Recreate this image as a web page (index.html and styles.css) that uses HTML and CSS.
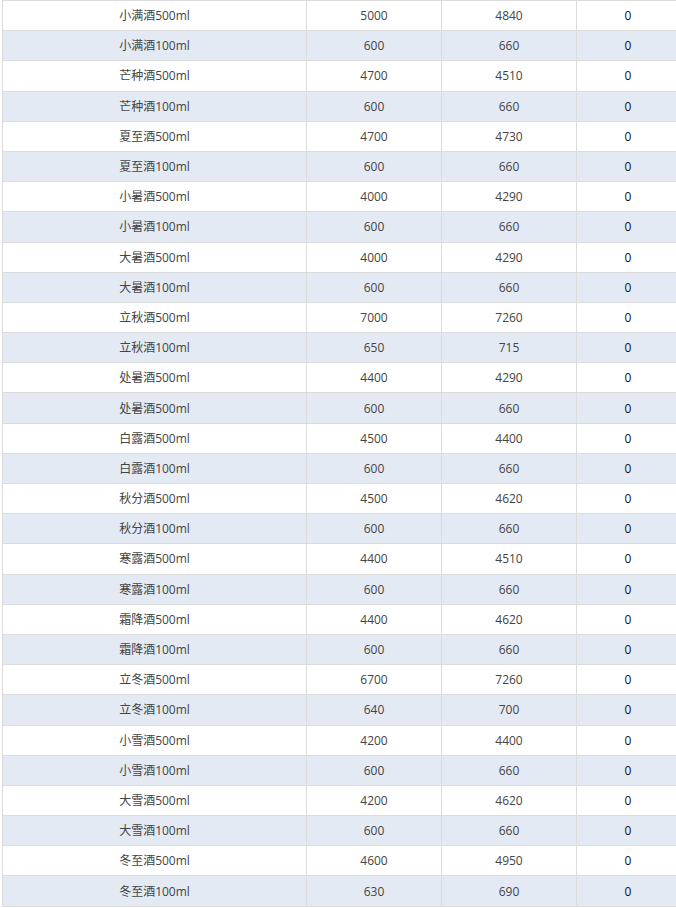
FILE: index.html
```html
<!DOCTYPE html>
<html lang="zh">
<head>
<meta charset="utf-8">
<link rel="stylesheet" href="styles.css">
</head>
<body>
<div class="wrap">
<table class="grid">
<colgroup><col class="c1"><col class="c2"><col class="c3"><col class="c4"></colgroup>
<tbody>
<tr><td>小满酒500ml</td><td>5000</td><td>4840</td><td class="z">0</td></tr>
<tr><td>小满酒100ml</td><td>600</td><td>660</td><td class="z">0</td></tr>
<tr><td>芒种酒500ml</td><td>4700</td><td>4510</td><td class="z">0</td></tr>
<tr><td>芒种酒100ml</td><td>600</td><td>660</td><td class="z">0</td></tr>
<tr><td>夏至酒500ml</td><td>4700</td><td>4730</td><td class="z">0</td></tr>
<tr><td>夏至酒100ml</td><td>600</td><td>660</td><td class="z">0</td></tr>
<tr><td>小暑酒500ml</td><td>4000</td><td>4290</td><td class="z">0</td></tr>
<tr><td>小暑酒100ml</td><td>600</td><td>660</td><td class="z">0</td></tr>
<tr><td>大暑酒500ml</td><td>4000</td><td>4290</td><td class="z">0</td></tr>
<tr><td>大暑酒100ml</td><td>600</td><td>660</td><td class="z">0</td></tr>
<tr><td>立秋酒500ml</td><td>7000</td><td>7260</td><td class="z">0</td></tr>
<tr><td>立秋酒100ml</td><td>650</td><td>715</td><td class="z">0</td></tr>
<tr><td>处暑酒500ml</td><td>4400</td><td>4290</td><td class="z">0</td></tr>
<tr><td>处暑酒500ml</td><td>600</td><td>660</td><td class="z">0</td></tr>
<tr><td>白露酒500ml</td><td>4500</td><td>4400</td><td class="z">0</td></tr>
<tr><td>白露酒100ml</td><td>600</td><td>660</td><td class="z">0</td></tr>
<tr><td>秋分酒500ml</td><td>4500</td><td>4620</td><td class="z">0</td></tr>
<tr><td>秋分酒100ml</td><td>600</td><td>660</td><td class="z">0</td></tr>
<tr><td>寒露酒500ml</td><td>4400</td><td>4510</td><td class="z">0</td></tr>
<tr><td>寒露酒100ml</td><td>600</td><td>660</td><td class="z">0</td></tr>
<tr><td>霜降酒500ml</td><td>4400</td><td>4620</td><td class="z">0</td></tr>
<tr><td>霜降酒100ml</td><td>600</td><td>660</td><td class="z">0</td></tr>
<tr><td>立冬酒500ml</td><td>6700</td><td>7260</td><td class="z">0</td></tr>
<tr><td>立冬酒100ml</td><td>640</td><td>700</td><td class="z">0</td></tr>
<tr><td>小雪酒500ml</td><td>4200</td><td>4400</td><td class="z">0</td></tr>
<tr><td>小雪酒100ml</td><td>600</td><td>660</td><td class="z">0</td></tr>
<tr><td>大雪酒500ml</td><td>4200</td><td>4620</td><td class="z">0</td></tr>
<tr><td>大雪酒100ml</td><td>600</td><td>660</td><td class="z">0</td></tr>
<tr><td>冬至酒500ml</td><td>4600</td><td>4950</td><td class="z">0</td></tr>
<tr><td>冬至酒100ml</td><td>630</td><td>690</td><td class="z">0</td></tr>
</tbody>
</table>
</div>
</body>
</html>
```
FILE: styles.css
```css
html, body {
  margin: 0;
  padding: 0;
  background: #ffffff;
  overflow: hidden;
}
.wrap {
  padding-left: 2px;
  width: 680px;
}
.grid {
  border-collapse: collapse;
  table-layout: fixed;
  width: 677px;
  font-family: "Open Sans", "Noto Sans CJK SC", sans-serif;
  font-size: 12px;
  color: #444;
}
.c1 { width: 304px; }
.c2 { width: 135px; }
.c3 { width: 135px; }
.c4 { width: 103px; }
.grid td {
  border: 1px solid #dcdcdc;
  height: 28.2px;
  padding: 1px 0 0 0;
  text-align: center;
  vertical-align: middle;
  line-height: 16px;
}
.grid tr:nth-child(even) td {
  background: #e4eaf4;
}
.grid td.z {
  color: #111;
}
```
